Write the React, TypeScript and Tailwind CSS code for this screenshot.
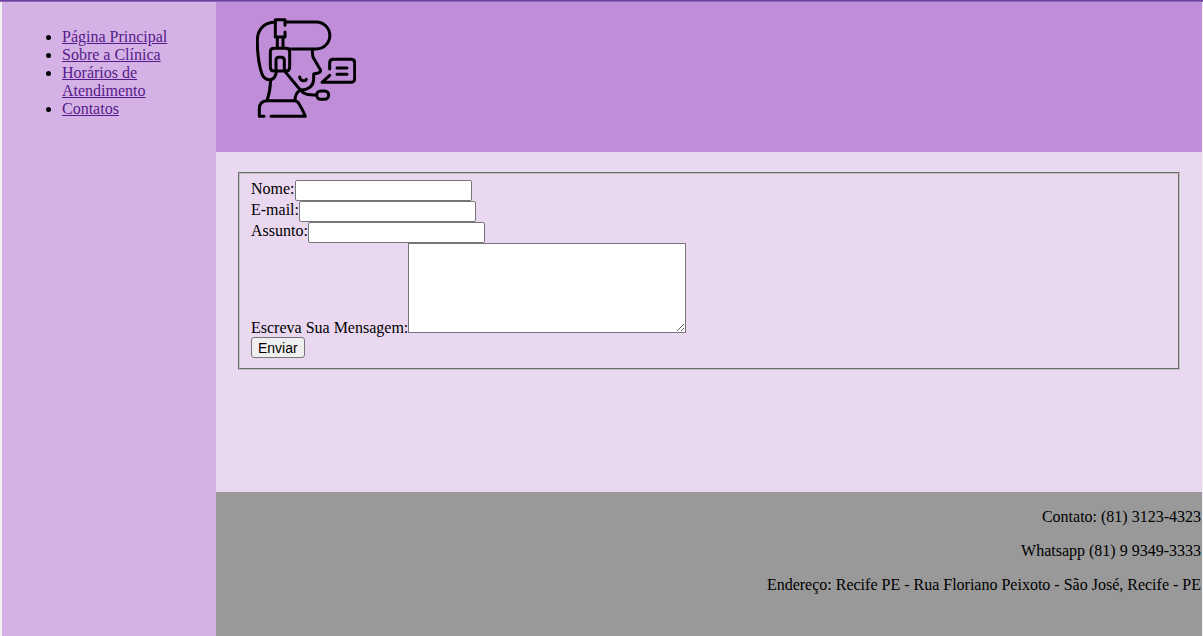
import React from "react";

const links = [
  "Página Principal",
  "Sobre a Clínica",
  "Horários de Atendimento",
  "Contatos",
];

function AttendantIcon() {
  return (
    <svg
      viewBox="18 24 300 300"
      className="size-[100px]"
      fill="none"
      stroke="#000"
      strokeWidth="9"
      strokeLinecap="round"
      strokeLinejoin="round"
      role="img"
      aria-label="Atendente"
    >
      <path d="M105 46V29H76V81H105V66" />
      <path d="M108 36H199A40 40 0 0 1 199 117H119" />
      <path d="M76 36C40 37 21 61 22 94C22 128 26 161 35 190C40 204 48 210 60 209C72 208 77 201 79 186" />
      <path d="M82 83V112M99 83V112" />
      <path d="M72 115H108Q119 115 119 126V171Q119 183 108 183H72Q61 183 61 171V126Q61 115 72 115Z" />
      <path d="M78 181V151Q78 142 86 142H94Q103 142 103 151V181" />
      <path d="M187 119C187 132 187 139 191 145L211 179Q214 186 204 189L191 192V208C190 229 174 240 151 240L107 187" />
      <path d="M149 201C151 214 166 215 169 208" />
      <path d="M62 211C61 234 58 252 51 272" />
      <path d="M151 240C137 248 135 259 135 271M151 240C161 253 174 255 199 255" />
      <rect x="200" y="243" width="36" height="25" rx="12" />
      <path d="M42 319H28V295Q29 273 51 272H132Q142 272 147 281C155 294 161 306 166 319H63" />
      <path d="M239 177V159Q239 148 250 148H303Q314 148 314 159V206Q314 217 303 217H216L239 196" />
      <path d="M261 174H291M261 193H291" />
    </svg>
  );
}

function TextField({ id, label, type = "text" }: { id: string; label: string; type?: string }) {
  return (
    <div className="flex items-start">
      <label htmlFor={id}>{label}</label>
      <input
        id={id}
        name={id}
        type={type}
        className="h-[21px] w-[177px] rounded-xs border border-[#767676] bg-white px-0.5 font-['Liberation_Sans',sans-serif] text-[13px]"
      />
    </div>
  );
}

export default function App() {
  return (
    <div className="flex min-h-screen flex-col bg-[#f0f0f0] font-['Liberation_Serif',serif] text-base leading-[18px] text-black">
      <div className="h-0.5 border-b border-[#8f64b7] bg-[#6b3fa0]" />
      <div className="flex grow pr-px pl-0.5">
        <nav className="w-[214px] shrink-0 bg-[#d5b2e5] pt-[26px] pr-8">
          <ul className="list-disc pl-[60px]">
            {links.map((text) => (
              <li key={text}>
                <a href="#" className="text-[#551a8b] underline">
                  {text}
                </a>
              </li>
            ))}
          </ul>
        </nav>
        <div className="flex min-w-0 grow flex-col">
          <header className="h-[150px] bg-[#c08dd9] px-10 pt-4">
            <AttendantIcon />
          </header>
          <main className="min-h-[340px] bg-[#ead8f1] px-[22px] pt-5">
            <form onSubmit={(e) => e.preventDefault()}>
              <fieldset className="border-2 border-[#c0c0c0] px-[11px] pt-1.5 pb-2.5 [border-style:groove]">
                <TextField id="nome" label="Nome:" />
                <TextField id="email" label="E-mail:" type="email" />
                <TextField id="assunto" label="Assunto:" />
                <div className="flex items-end">
                  <label htmlFor="mensagem">Escreva Sua Mensagem:</label>
                  <textarea
                    id="mensagem"
                    name="mensagem"
                    className="mb-1 h-[90px] w-[278px] resize border border-[#767676] bg-white p-0.5 font-['Liberation_Mono',monospace] text-[13px]"
                  />
                </div>
                <button
                  type="submit"
                  className="block h-[21px] rounded-[3px] border border-[#767676] bg-[#efefef] px-1.5 font-['Liberation_Sans',sans-serif] text-sm leading-4"
                >
                  Enviar
                </button>
              </fieldset>
            </form>
          </main>
          <footer className="flex grow flex-col gap-4 bg-[#999999] pt-4 pr-px text-right">
            <p>Contato: (81) 3123-4323</p>
            <p>Whatsapp (81) 9 9349-3333</p>
            <p>Endereço: Recife PE - Rua Floriano Peixoto - São José, Recife - PE</p>
          </footer>
        </div>
      </div>
    </div>
  );
}
